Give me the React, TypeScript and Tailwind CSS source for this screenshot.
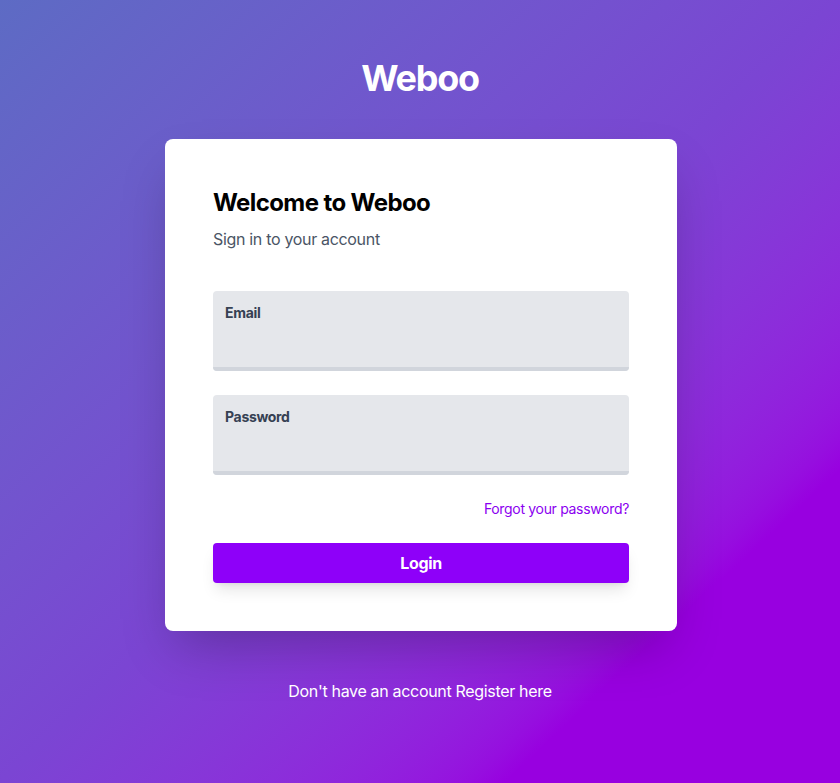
import React from 'react'

const Field = ({ id, label, type }: { id: string; label: string; type: string }) => (
  <div className="mb-6 pt-3 rounded bg-gray-200">
    <label htmlFor={id} className="block text-gray-700 text-sm font-bold mb-2 ml-3">
      {label}
    </label>
    <input
      id={id}
      type={type}
      className="block bg-gray-200 rounded w-full text-gray-700 focus:outline-none border-b-4 border-gray-300 px-3 pb-3 text-base leading-6"
    />
  </div>
)

const App = () => {
  return (
    <div className="min-h-screen w-full bg-linear-to-br from-[#5d6bc4] via-[#7b45d3] via-50% to-[#9800e0] to-80% flex flex-col items-center px-4 pt-[58px] pb-10 font-['Inter',sans-serif] tracking-[-0.02em]">
      <h1 className="text-4xl leading-10 font-bold text-white text-center tracking-[-0.035em]">Weboo</h1>

      <main className="w-full max-w-lg mt-[41px] ml-[2px] bg-white rounded-lg shadow-2xl px-12 py-12">
        <section>
          <h3 className="font-bold text-2xl leading-8 text-black tracking-[-0.025em]">Welcome to Weboo</h3>
          <p className="text-gray-600 pt-2 text-base leading-6">Sign in to your account</p>
        </section>

        <form className="flex flex-col mt-10" onSubmit={(e) => e.preventDefault()}>
          <Field id="email" label="Email" type="text" />
          <Field id="password" label="Password" type="password" />
          <div className="flex justify-end">
            <a href="#" className="text-sm leading-5 text-[#8b00f0] mb-6">
              Forgot your password?
            </a>
          </div>
          <button
            type="submit"
            className="bg-[#8e00f9] text-white font-bold py-2 leading-6 rounded shadow-lg"
          >
            Login
          </button>
        </form>
      </main>

      <div className="mt-12 text-center text-white text-base leading-6">
        <p>
          Don't have an account <a href="#">Register here</a>
        </p>
      </div>
    </div>
  )
}

export default App
